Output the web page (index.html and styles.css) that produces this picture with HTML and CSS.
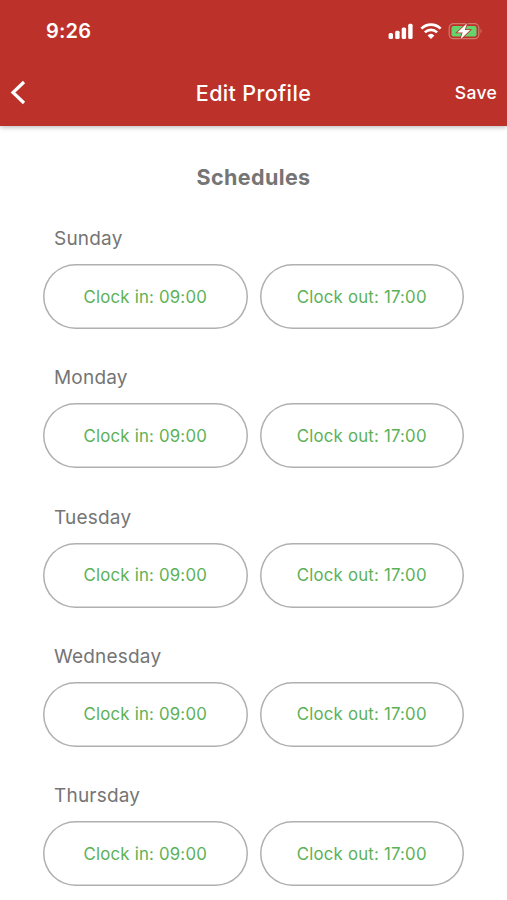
FILE: index.html
```html
<!DOCTYPE html>
<html lang="en">
<head>
    <meta charset="UTF-8">
    <meta name="viewport" content="width=device-width, initial-scale=1.0">
    <title>Edit Profile</title>
    <link rel="stylesheet" href="styles.css">
</head>
<body>
    <header class="app-header">
        <div class="status-bar">
            <span class="status-time">9:26</span>
            <svg class="status-icons" width="96" height="20" viewBox="0 0 96 20">
                <!-- signal -->
                <g fill="#fff">
                    <rect x="0.6" y="12" width="4.4" height="6" rx="1.5"/>
                    <rect x="7.2" y="9.8" width="4.4" height="8.2" rx="1.5"/>
                    <rect x="13.7" y="6.5" width="4.4" height="11.5" rx="1.5"/>
                    <rect x="20.2" y="2.8" width="4.4" height="15.2" rx="1.5"/>
                </g>
                <!-- wifi -->
                <g fill="none" stroke="#fff" stroke-width="2.7">
                    <path d="M33.4 7.6a13.6 13.6 0 0 1 19.2 0"/>
                    <path d="M36.9 11.4a8.7 8.7 0 0 1 12.2 0"/>
                </g>
                <path d="M39.6 14.4a5 5 0 0 1 6.8 0L43 18z" fill="#fff"/>
                <!-- battery -->
                <rect x="61.2" y="2.7" width="29.6" height="15" rx="4.2" fill="none" stroke="#d07a6c" stroke-width="1.2"/>
                <rect x="63.5" y="5" width="25" height="10.5" rx="2" fill="#65d36e"/>
                <path d="M92.5 7.8q2.2 2.4 0 4.8z" fill="#d07a6c"/>
                <path d="M79 2.3l-9.8 9.2h5.4l-2.2 6.9 9.8-9.4h-5.4z" fill="#fff" stroke="#bc322a" stroke-width="1.6" paint-order="stroke"/>
            </svg>
        </div>
        <div class="nav-bar">
            <a href="#" class="back" aria-label="Back">
                <svg width="16" height="26" viewBox="0 0 16 26">
                    <path d="M14 2L3 12.5l11 10.5" fill="none" stroke="#fff" stroke-width="3.2"/>
                </svg>
            </a>
            <h1>Edit Profile</h1>
            <a href="#" class="save">Save</a>
        </div>
    </header>

    <main class="schedules">
        <h2>Schedules</h2>
        <section class="day">
            <h3>Sunday</h3>
            <div class="times">
                <button class="in">Clock in: 09:00</button>
                <button class="out">Clock out: 17:00</button>
            </div>
        </section>
        <section class="day">
            <h3>Monday</h3>
            <div class="times">
                <button class="in">Clock in: 09:00</button>
                <button class="out">Clock out: 17:00</button>
            </div>
        </section>
        <section class="day">
            <h3>Tuesday</h3>
            <div class="times">
                <button class="in">Clock in: 09:00</button>
                <button class="out">Clock out: 17:00</button>
            </div>
        </section>
        <section class="day">
            <h3>Wednesday</h3>
            <div class="times">
                <button class="in">Clock in: 09:00</button>
                <button class="out">Clock out: 17:00</button>
            </div>
        </section>
        <section class="day">
            <h3>Thursday</h3>
            <div class="times">
                <button class="in">Clock in: 09:00</button>
                <button class="out">Clock out: 17:00</button>
            </div>
        </section>
    </main>
</body>
</html>
```
FILE: styles.css
```css
* {
    box-sizing: border-box;
}
body {
    font-family: Inter, sans-serif;
    margin: 0;
    background-color: #fff;
    color: #757575;
}
.app-header {
    height: 126px;
    background-color: #bc322a;
    color: #fff;
    box-shadow: 0 1px 5px rgba(0, 0, 0, 0.3);
}
.status-bar {
    display: flex;
    justify-content: space-between;
    align-items: center;
    height: 61px;
    padding: 0 23px 0 46px;
}
.status-time {
    padding-top: 1px;
    font-size: 20px;
    font-weight: 600;
    line-height: 24px;
    letter-spacing: 0.2px;
}
.nav-bar {
    display: grid;
    grid-template-columns: 1fr auto 1fr;
    align-items: center;
    height: 64px;
    padding: 0 10px 0 10px;
}
.nav-bar a {
    color: #fff;
    text-decoration: none;
}
.back svg {
    display: block;
}
.nav-bar h1 {
    margin: 0;
    font-size: 21.5px;
    font-weight: 500;
    letter-spacing: 0.35px;
}
.save {
    justify-self: end;
    padding-bottom: 1px;
    font-size: 17.5px;
    font-weight: 500;
    letter-spacing: 0.3px;
}
.schedules {
    padding: 36px 43px 0;
}
.schedules h2 {
    margin: 0;
    font-size: 21.5px;
    font-weight: 700;
    line-height: 30px;
    letter-spacing: 0.4px;
    text-align: center;
}
.day {
    height: 139.25px;
    padding-top: 34px;
}
.day h3 {
    margin: 0 0 12px;
    padding-left: 11px;
    font-size: 19px;
    font-weight: 400;
    line-height: 26px;
    letter-spacing: 0.2px;
}
.times {
    display: flex;
    gap: 12px;
}
.times button {
    width: 205px;
    height: 65px;
    padding: 0;
    background-color: #fff;
    border: none;
    border-radius: 33px;
    box-shadow: inset 0 0 0 1.5px #b0b0b0;
    color: #5cb157;
    font-family: inherit;
    font-size: 16.8px;
    letter-spacing: 0.2px;
}
```
